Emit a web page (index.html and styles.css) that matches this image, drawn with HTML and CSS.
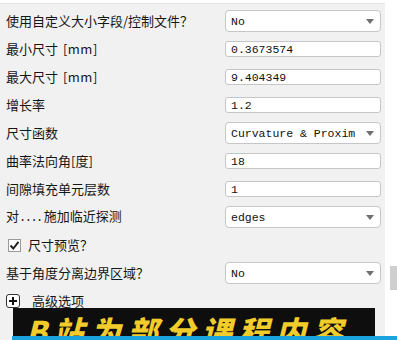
FILE: index.html
```html
<!DOCTYPE html>
<html lang="zh">
<head>
<meta charset="utf-8">
<link rel="stylesheet" href="styles.css">
</head>
<body>
<div class="page">
  <div class="panel">
    <div class="form">
      <div class="label">使用自定义大小字段/控制文件？</div>
      <div class="select"><span>No</span><i class="arrow"></i></div>

      <div class="label">最小尺寸 <span class="unit">[mm]</span></div>
      <div class="input">0.3673574</div>

      <div class="label">最大尺寸 <span class="unit">[mm]</span></div>
      <div class="input">9.404349</div>

      <div class="label">增长率</div>
      <div class="input">1.2</div>

      <div class="label">尺寸函数</div>
      <div class="select"><span>Curvature &amp; Proxim</span><i class="arrow"></i></div>

      <div class="label">曲率法向角[度]</div>
      <div class="input">18</div>

      <div class="label">间隙填充单元层数</div>
      <div class="input">1</div>

      <div class="label">对<span class="dots">....</span>施加临近探测</div>
      <div class="select"><span>edges</span><i class="arrow"></i></div>

      <div class="check-row">
        <span class="checkbox"><svg width="11" height="11" viewBox="0 0 11 11"><path d="M1.5 5.5 L4.3 8.5 L9.5 1.8" fill="none" stroke="#222" stroke-width="2"/></svg></span>
        <span>尺寸预览？</span>
      </div>

      <div class="label">基于角度分离边界区域？</div>
      <div class="select"><span>No</span><i class="arrow"></i></div>

      <div class="expand-row">
        <span class="plus"><svg width="10" height="10" viewBox="0 0 10 10"><path d="M5 1 V9 M1 5 H9" stroke="#111" stroke-width="2"/></svg></span>
        <span>高级选项</span>
      </div>
    </div>
  </div>
  <div class="side"><div class="thumb"></div></div>
  <div class="banner"><span class="banner-text">B站为部分课程内容</span></div>
  <div class="bluebar"></div>
</div>
</body>
</html>
```

FILE: styles.css
```css
html, body {
  margin: 0;
  padding: 0;
  background: #ffffff;
}
.page {
  position: relative;
  display: flex;
  width: 397px;
  height: 340px;
  overflow: hidden;
  font-family: "Noto Sans CJK SC", "Liberation Sans", sans-serif;
  font-size: 13px;
  color: #161616;
}
.panel {
  width: 385px;
  flex: none;
  background: #f1f1f1;
  border-top: 1px solid #e4e4e4;
  margin-top: 3px;
  padding-top: 3px;
  box-sizing: border-box;
}
.form {
  display: grid;
  grid-template-columns: 219px 156px;
  grid-auto-rows: 28px;
  align-items: center;
  padding-left: 6px;
}
.label {
  line-height: 16px;
  white-space: nowrap;
}
.unit {
  margin-left: 2px;
  letter-spacing: 0.5px;
}
.dots {
  font-family: "Liberation Mono", monospace;
  font-size: 12px;
  letter-spacing: -1.5px;
  margin-right: 2px;
}
.select, .input {
  box-sizing: border-box;
  background: #ffffff;
  border: 1px solid #c6c6c6;
  font-family: "Liberation Mono", "DejaVu Sans Mono", monospace;
  font-size: 11.5px;
  color: #111;
  padding-left: 5px;
  display: flex;
  align-items: center;
  white-space: nowrap;
  overflow: hidden;
}
.select {
  height: 22px;
  border-radius: 4px;
  justify-content: space-between;
  padding-right: 6px;
}
.input {
  height: 16px;
  border-radius: 3px;
}
.arrow {
  width: 0;
  height: 0;
  border-left: 4px solid transparent;
  border-right: 4px solid transparent;
  border-top: 5px solid #707070;
  flex: none;
}
.check-row, .expand-row {
  grid-column: 1 / 3;
  display: flex;
  align-items: center;
  line-height: 16px;
}
.checkbox {
  width: 13px;
  height: 13px;
  box-sizing: border-box;
  border: 1px solid #9a9a9a;
  background: #fff;
  margin-left: 2px;
  margin-right: 7px;
  display: flex;
  align-items: center;
  justify-content: center;
}
.plus {
  width: 14px;
  height: 14px;
  box-sizing: border-box;
  border: 1px solid #333;
  border-radius: 3px;
  background: #fff;
  margin-right: 12px;
  display: flex;
  align-items: center;
  justify-content: center;
}
.side {
  flex: 1;
  position: relative;
  background: #ffffff;
}
.thumb {
  position: absolute;
  left: 5px;
  right: 0;
  top: 266px;
  height: 24px;
  background: #cfcfcf;
}
.banner {
  position: absolute;
  left: 13px;
  top: 308px;
  width: 362px;
  height: 32px;
  background: #0e0e0e;
  overflow: hidden;
}
.banner-text {
  display: block;
  padding-left: 13px;
  padding-top: 7px;
  font-size: 30px;
  line-height: 30px;
  font-weight: 900;
  font-style: italic;
  letter-spacing: 7px;
  color: #f2cc2a;
  white-space: nowrap;
}
.bluebar {
  position: absolute;
  left: 12px;
  right: 0;
  bottom: 0;
  height: 4px;
  background: #1ba3e0;
}
```
